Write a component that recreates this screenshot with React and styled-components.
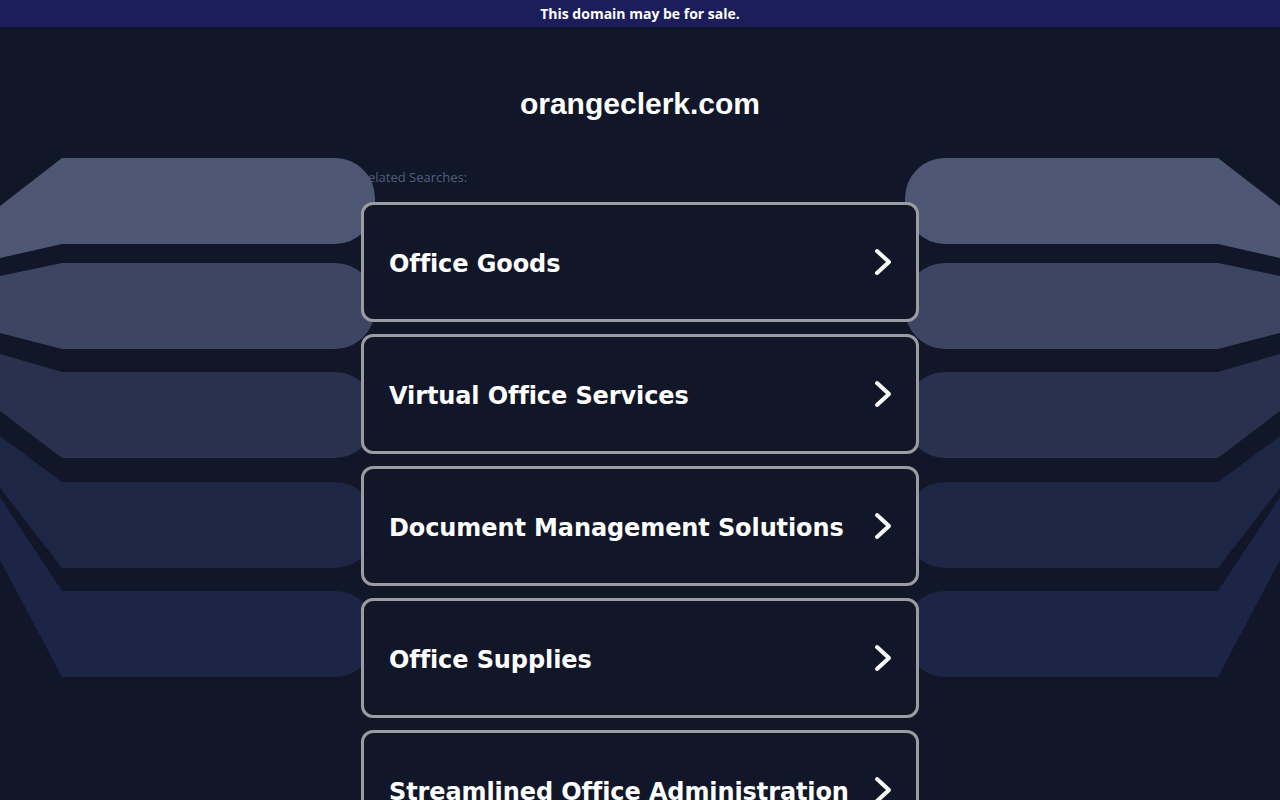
import styled, { createGlobalStyle } from "styled-components";

const GlobalStyle = createGlobalStyle`
  html, body {
    margin: 0;
    padding: 0;
    background: #111629;
  }
  * {
    box-sizing: border-box;
  }
`;

const searches = [
  "Office Goods",
  "Virtual Office Services",
  "Document Management Solutions",
  "Office Supplies",
  "Streamlined Office Administration",
];

// the fan of bars behind the list, left side; the right side is a mirror
const bars = [
  { top: 158, bottom: 244, edgeTop: 206, edgeBottom: 258, color: "#4d5673" },
  { top: 263, bottom: 349, edgeTop: 276, edgeBottom: 333, color: "#3c4561" },
  { top: 372, bottom: 458, edgeTop: 354, edgeBottom: 411, color: "#29314e" },
  { top: 482, bottom: 568, edgeTop: 436, edgeBottom: 488, color: "#1e2645" },
  { top: 591, bottom: 677, edgeTop: 497, edgeBottom: 560, color: "#1c2545" },
];

const leftBar = (b) =>
  `M0 ${b.edgeTop} L62 ${b.top} L335 ${b.top} A40 40 0 0 1 375 ${b.top + 40} L375 ${b.bottom - 40} A40 40 0 0 1 335 ${b.bottom} L62 ${b.bottom} L0 ${b.edgeBottom} Z`;

const rightBar = (b) =>
  `M1280 ${b.edgeTop} L1218 ${b.top} L945 ${b.top} A40 40 0 0 0 905 ${b.top + 40} L905 ${b.bottom - 40} A40 40 0 0 0 945 ${b.bottom} L1218 ${b.bottom} L1280 ${b.edgeBottom} Z`;

const Page = styled.div`
  position: relative;
  min-height: 800px;
  background: #111629;
  overflow: hidden;
`;

const SaleBar = styled.div`
  height: 27px;
  background: #1b1e5b;
  color: #ffffff;
  font-family: "Open Sans", "Noto Sans", sans-serif;
  font-weight: 700;
  font-size: 14px;
  line-height: 27px;
  text-align: center;
`;

const Domain = styled.h1`
  margin: 59px 0 0;
  color: #ffffff;
  font-family: "Liberation Sans", Arial, sans-serif;
  font-weight: 700;
  font-size: 30px;
  line-height: 36px;
  text-align: center;
`;

const Backdrop = styled.svg`
  position: absolute;
  top: 0;
  left: 0;
  width: 1280px;
  height: 800px;
  z-index: 1;
  pointer-events: none;
`;

const Column = styled.div`
  width: 558px;
  margin: 46px auto 0;
  display: flex;
  flex-direction: column;
`;

const Label = styled.div`
  position: relative;
  z-index: 0;
  margin-left: -1px;
  color: #545d7b;
  font-family: "Open Sans", "Noto Sans", sans-serif;
  font-size: 13px;
  line-height: 18px;
`;

const List = styled.div`
  position: relative;
  z-index: 2;
  margin-top: 16px;
  display: flex;
  flex-direction: column;
  gap: 12px;
`;

const Card = styled.a`
  height: 120px;
  display: flex;
  align-items: center;
  justify-content: space-between;
  padding: 0 24px 0 25px;
  background: #111629;
  border: 3px solid #9b9ba0;
  border-radius: 12px;
  color: #ffffff;
  text-decoration: none;
  cursor: pointer;
`;

const CardText = styled.span`
  margin-top: 4px;
  font-family: "DejaVu Sans", Verdana, sans-serif;
  font-weight: 700;
  font-size: 24px;
  letter-spacing: -0.1px;
  white-space: nowrap;
`;

const Chevron = () => (
  <svg width="18" height="28" viewBox="0 0 18 28">
    <polyline
      points="3,3 15,14 3,25"
      fill="none"
      stroke="#ffffff"
      strokeWidth="4"
      strokeLinecap="round"
      strokeLinejoin="round"
    />
  </svg>
);

export default function App() {
  return (
    <Page>
      <GlobalStyle />
      <SaleBar>This domain may be for sale.</SaleBar>
      <Domain>orangeclerk.com</Domain>
      <Backdrop viewBox="0 0 1280 800">
        {bars.map((b, i) => (
          <g key={i} fill={b.color}>
            <path d={leftBar(b)} />
            <path d={rightBar(b)} />
          </g>
        ))}
      </Backdrop>
      <Column>
        <Label>Related Searches:</Label>
        <List>
          {searches.map((s) => (
            <Card key={s}>
              <CardText>{s}</CardText>
              <Chevron />
            </Card>
          ))}
        </List>
      </Column>
    </Page>
  );
}
